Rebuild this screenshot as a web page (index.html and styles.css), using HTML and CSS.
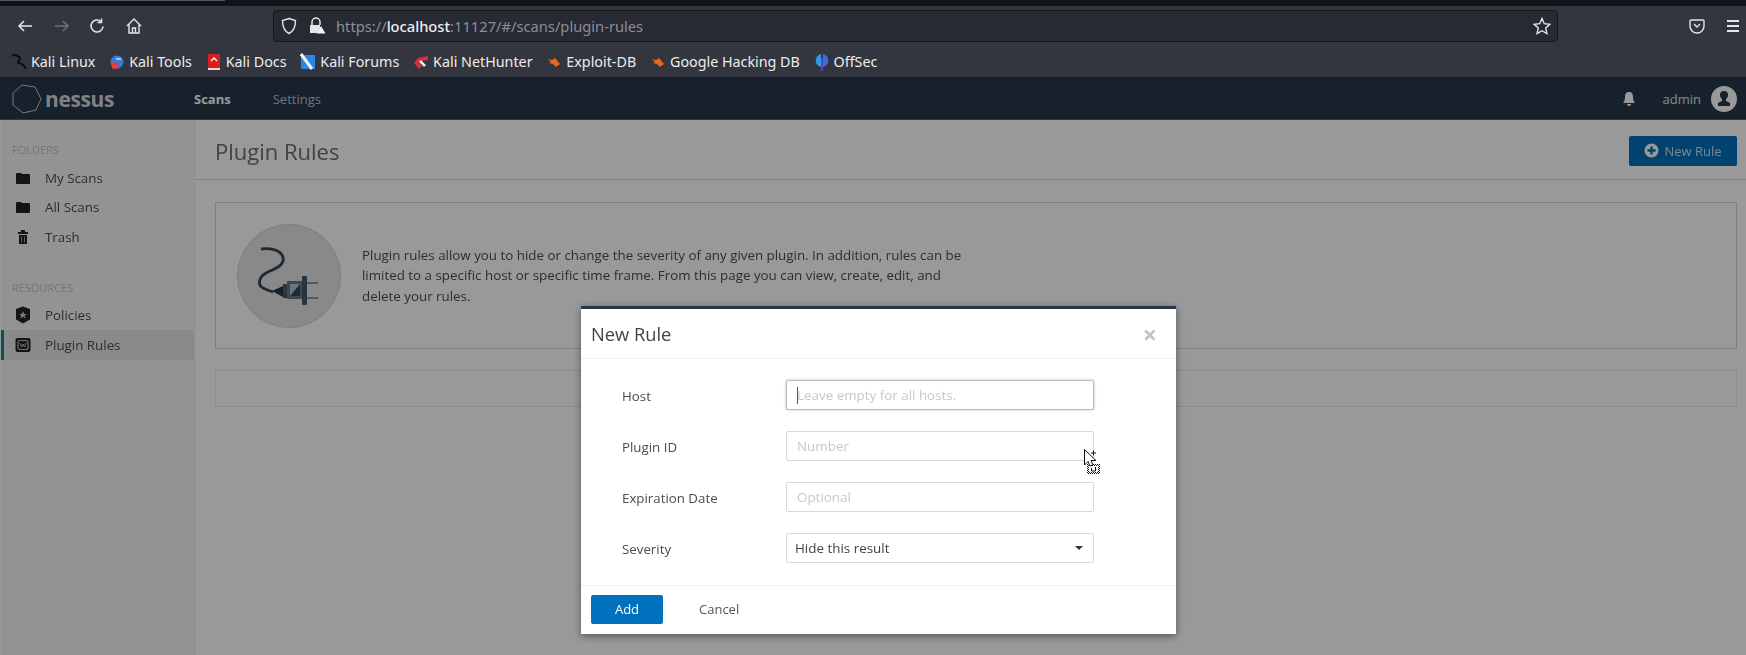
FILE: index.html
```html
<!DOCTYPE html>
<html lang="en">
<head>
    <meta charset="UTF-8">
    <title>Nessus - Plugin Rules</title>
    <link rel="stylesheet" href="styles.css">
</head>
<body>

<div class="screen">
    <div class="tabstrip"><div class="tabline"></div></div>

    <div class="toolbar">
        <svg class="tool tool-back" width="18" height="18" viewBox="0 0 18 18"><path d="M16 9H3M8 4 3 9l5 5" fill="none" stroke="#e6e6e8" stroke-width="1.5"/></svg>
        <svg class="tool tool-forward" width="18" height="18" viewBox="0 0 18 18"><path d="M2 9h13M10 4l5 5-5 5" fill="none" stroke="#6f717a" stroke-width="1.5"/></svg>
        <svg class="tool tool-reload" width="18" height="18" viewBox="0 0 18 18"><path d="M15 9.500A6 6 0 1 1 12.800 4.300M13.500 1.500v4h-4" fill="none" stroke="#e6e6e8" stroke-width="1.6"/></svg>
        <svg class="tool tool-home" width="18" height="18" viewBox="0 0 18 18"><path d="M2 9 9 2l7 7M4 7.500V16h10V7.500M7.500 16v-5h3v5" fill="none" stroke="#e6e6e8" stroke-width="1.4"/></svg>
        <div class="urlbar">
            <svg class="url-shield" width="16" height="18" viewBox="0 0 16 18"><path d="M8 1.500 14.500 3.500C14.500 10 13 14 8 16.500 3 14 1.500 10 1.500 3.500Z" fill="none" stroke="#e6e6e8" stroke-width="1.4"/></svg>
            <svg class="url-lock" width="18" height="18" viewBox="0 0 18 18"><path d="M4 8V5a4 4 0 0 1 8 0v3" fill="none" stroke="#e6e6e8" stroke-width="1.5"/><path d="M2 8h10v3l-3 5H2Z" fill="#e6e6e8"/><path d="M13 9l4.500 7.500h-9Z" fill="#f2f2f2"/></svg>
            <span class="url-text">https://<b>localhost</b>:11127/#/scans/plugin-rules</span>
            <svg class="url-star" width="18" height="18" viewBox="0 0 18 18"><path d="M9 1.500 11.300 6.700 16.800 7.300 12.700 11 13.900 16.500 9 13.700 4.100 16.500 5.300 11 1.200 7.300 6.700 6.700Z" fill="none" stroke="#e6e6e8" stroke-width="1.4"/></svg>
        </div>
        <svg class="tool tool-pocket" width="16" height="18" viewBox="0 0 16 18"><path d="M2 3h12a1 1 0 0 1 1 1v5a7 7 0 0 1-14 0V4a1 1 0 0 1 1-1Z" fill="none" stroke="#e6e6e8" stroke-width="1.4"/><path d="M5 7l3 3 3-3" fill="none" stroke="#e6e6e8" stroke-width="1.4"/></svg>
        <div class="tool-menu"><i></i><i></i><i></i></div>
    </div>

    <div class="bookmarks">
        <a class="bookmark">
            <svg width="16" height="18" viewBox="0 0 16 18"><path d="M1 3c3-2 5-1 7 1 2 2 0 4-1 5s3 1 5 3l3 4" fill="none" stroke="#0b0b0d" stroke-width="2"/></svg>
            Kali Linux</a>
        <a class="bookmark">
            <svg width="16" height="16" viewBox="0 0 14 16"><circle cx="7" cy="8" r="6.500" fill="#2f7fe0"/><circle cx="5" cy="11.500" r="3.500" fill="#e2403f"/><path d="M6 5h5" stroke="#cfe3fa" stroke-width="1.500"/></svg>
            Kali Tools</a>
        <a class="bookmark">
            <svg width="16" height="18" viewBox="0 0 14 18"><rect x="1" y="1" width="12" height="14" fill="#d81e1e"/><rect x="1" y="15" width="12" height="2" fill="#f0d8d8"/><path d="M4 8l3-3 3 3" fill="none" stroke="#fff" stroke-width="1.300"/></svg>
            Kali Docs</a>
        <a class="bookmark">
            <svg width="16" height="18" viewBox="0 0 16 18"><rect x="1" y="2" width="14" height="14" fill="#2a86e8"/><path d="M1 1l11 15" stroke="#f2f2f2" stroke-width="3"/></svg>
            Kali Forums</a>
        <a class="bookmark">
            <svg width="16" height="18" viewBox="0 0 16 18"><path d="M15 3 5 5 1 10l5 6 3-3-3-3 3-2 6-1Z" fill="#d62d3a"/><path d="M7 8l5 5" stroke="#eee" stroke-width="2.500"/></svg>
            Kali NetHunter</a>
        <a class="bookmark">
            <svg width="16" height="16" viewBox="0 0 14 16"><path d="M1 5l4 1 3-2 5 6-4 3-3-3-4-1 2-1Z" fill="#e8691e"/></svg>
            Exploit-DB</a>
        <a class="bookmark">
            <svg width="16" height="16" viewBox="0 0 14 16"><path d="M1 5l4 1 3-2 5 6-4 3-3-3-4-1 2-1Z" fill="#e8691e"/></svg>
            Google Hacking DB</a>
        <a class="bookmark">
            <svg width="16" height="20" viewBox="0 0 14 20"><path d="M6 2C2 3 0 7 1 11c1 2 3 3 5 4Z" fill="#2f9be8"/><path d="M8 2c4 1 6 5 5 9-1 2-3 3-5 4Z" fill="#3a6fe0"/><path d="M7 6v13" stroke="#7a3fd8" stroke-width="1.500"/></svg>
            OffSec</a>
    </div>

    <div class="app">
        <header class="topbar">
            <div class="logo">
                <svg width="32" height="30" viewBox="0 0 32 30"><path d="M11 1 24 3 30 15 25 26 12 29 2 21 2 9Z" fill="none" stroke="#fff" stroke-opacity=".75" stroke-width="1"/></svg>
                <span class="logo-text">nessus</span>
            </div>
            <nav class="topnav">
                <a class="topnav-item is-active">Scans</a>
                <a class="topnav-item">Settings</a>
            </nav>
            <div class="userbox">
                <svg width="14" height="16" viewBox="0 0 14 16"><path d="M7 1c-3 0-4 2-4 5 0 3-1 5-2 6h12c-1-1-2-3-2-6 0-3-1-5-4-5ZM5 13a2 2 0 0 0 4 0Z" fill="#fff"/></svg>
                <span class="username">admin</span>
                <div class="avatar">
                    <svg width="26" height="26" viewBox="0 0 26 26"><circle cx="13" cy="13" r="13" fill="#fff"/><path d="M13 5a4 4 0 0 1 4 4c0 2-1 3-2 4v2l4 2v3H7v-3l4-2v-2c-1-1-2-2-2-4a4 4 0 0 1 4-4Z" fill="#263748"/></svg>
                </div>
            </div>
        </header>

        <div class="layout">
            <aside class="sidebar">
                <h4 class="side-title">FOLDERS</h4>
                <a class="side-item">
                    <svg class="side-icon" width="16" height="14" viewBox="0 0 16 14"><path d="M1 3a1 1 0 0 1 1-1h4l1 1h7a1 1 0 0 1 1 1v8a1 1 0 0 1-1 1H2a1 1 0 0 1-1-1Z" fill="#222"/></svg>
                    My Scans</a>
                <a class="side-item">
                    <svg class="side-icon" width="16" height="14" viewBox="0 0 16 14"><path d="M1 3a1 1 0 0 1 1-1h4l1 1h7a1 1 0 0 1 1 1v8a1 1 0 0 1-1 1H2a1 1 0 0 1-1-1Z" fill="#222"/></svg>
                    All Scans</a>
                <a class="side-item">
                    <svg class="side-icon" width="16" height="16" viewBox="0 0 16 16"><path d="M6 1h4v2h3v2H3V3h3ZM4 6h8v9H4Z" fill="#222"/><path d="M6.500 7.500v6M9.500 7.500v6" stroke="#999" stroke-width="1"/></svg>
                    Trash</a>

                <h4 class="side-title side-title-second">RESOURCES</h4>
                <a class="side-item">
                    <svg class="side-icon" width="16" height="18" viewBox="0 0 16 18"><path d="M8 .500 15 3V13.500L8 17.500 1 13.500V3Z" fill="#222"/><path d="M8 5 9.200 8h2.800l-2.200 1.700.9 2.800L8 10.800 5.300 12.500l.9-2.800L4 8h2.800Z" fill="#ccc"/></svg>
                    Policies</a>
                <a class="side-item is-active">
                    <svg class="side-icon" width="16" height="16" viewBox="0 0 16 16"><rect x="0.500" y="1" width="15" height="14" rx="2" fill="#222"/><rect x="3" y="3.500" width="10" height="9" rx="2" fill="none" stroke="#bbb" stroke-width="1.200"/><path d="M5 6l1.500 4L8 7l1.500 3L11 6" fill="none" stroke="#bbb" stroke-width="1"/></svg>
                    Plugin Rules</a>
            </aside>

            <main class="content">
                <div class="titlebar">
                    <h1>Plugin Rules</h1>
                    <button class="btn-new" type="button">
                        <svg width="15" height="15" viewBox="0 0 15 15"><circle cx="7.500" cy="7.500" r="7" fill="#fff"/><path d="M7.500 3.500v8M3.500 7.500h8" stroke="#0071bc" stroke-width="2.400"/></svg>
                        New Rule</button>
                </div>
                <div class="panel">
                    <section class="intro">
                        <div class="intro-art">
                            <svg width="104" height="104" viewBox="0 0 104 104">
                                <circle cx="52" cy="52" r="51.500" fill="#e4e4e4" stroke="#d0d0d0"/>
                                <path d="M24 25c8-1 19 0 22 8 2 9-9 12-17 16-7 4-9 12-3 15 4 2 7 3 10 4" fill="none" stroke="#33465a" stroke-width="2.800"/>
                                <path d="M35 67l11-5v11Z" fill="#263748"/>
                                <rect x="46" y="60" width="4" height="14" fill="#4a5a6a"/>
                                <rect x="50" y="57" width="15" height="18" fill="#66788a"/>
                                <path d="M53 60h10v12H53Z" fill="#bcc5cd"/>
                                <path d="M63 60v12H53Z" fill="#33465a"/>
                                <rect x="65" y="52" width="5" height="29" rx="1" fill="#445669"/>
                                <path d="M70 59h11M70 74h11" stroke="#66788a" stroke-width="1.600"/>
                            </svg>
                        </div>
                        <p>Plugin rules allow you to hide or change the severity of any given plugin. In addition, rules can be limited to a specific host or specific time frame. From this page you can view, create, edit, and delete your rules.</p>
                    </section>
                    <div class="empty-row"></div>
                </div>
            </main>
        </div>

        <div class="overlay"></div>

        <form class="modal">
            <div class="modal-head">
                <h2>New Rule</h2>
                <span class="modal-close">&times;</span>
            </div>
            <div class="modal-body">
                <label class="field-label" for="host">Host</label>
                <div class="field">
                    <input class="field-input is-focused" id="host" type="text" placeholder="Leave empty for all hosts.">
                    <span class="caret"></span>
                </div>
                <label class="field-label" for="pluginId">Plugin ID</label>
                <div class="field"><input class="field-input" id="pluginId" type="text" placeholder="Number"></div>
                <label class="field-label" for="expires">Expiration Date</label>
                <div class="field"><input class="field-input" id="expires" type="text" placeholder="Optional"></div>
                <label class="field-label" for="severity">Severity</label>
                <div class="field">
                    <select class="field-input field-select" id="severity">
                        <option>Hide this result</option>
                    </select>
                    <span class="select-arrow"></span>
                </div>
            </div>
            <div class="modal-foot">
                <button class="btn-add" type="button">Add</button>
                <button class="btn-cancel" type="button">Cancel</button>
            </div>
        </form>
    </div>
</div>

<svg class="cursor" width="20" height="28" viewBox="0 0 20 28">
    <defs>
        <pattern id="checker" width="2" height="2" patternUnits="userSpaceOnUse">
            <rect width="1" height="1" fill="#111"/>
            <rect x="1" y="1" width="1" height="1" fill="#111"/>
        </pattern>
    </defs>
    <rect x="3" y="15" width="13" height="10" fill="#fff"/>
    <rect x="3" y="15" width="13" height="10" fill="url(#checker)"/>
    <rect x="5" y="17" width="9" height="6" fill="#fff"/>
    <path d="M.5.500V16L4 12.500 6 17l3-1-2-4.500h5Z" fill="#fff" stroke="#111"/>
    <path d="M9.500 1.500v5M7 4h5" stroke="#111"/>
    <path d="M7.500 19v3h4v-4" fill="none" stroke="#111"/>
</svg>

</body>
</html>
```

FILE: styles.css
```css
html, body {
    margin: 0;
    padding: 0;
    height: 655px;
    overflow: hidden;
}
body {
    font-family: "Open Sans", Arial, sans-serif;
    font-size: 13px;
    background-color: #fff;
    position: relative;
}
.screen {
    display: flex;
    flex-direction: column;
    height: 655px;
    filter: blur(0.5px);
}

/* browser chrome */
.tabstrip {
    height: 6px;
    background-color: #121317;
    flex-shrink: 0;
}
.tabline {
    width: 225px;
    height: 1px;
    background-color: #55565c;
}
.toolbar {
    height: 40px;
    background-color: #33363f;
    display: flex;
    align-items: center;
    flex-shrink: 0;
    position: relative;
}
.tool {
    flex-shrink: 0;
}
.tool-back { margin-left: 16px; }
.tool-forward { margin-left: 19px; }
.tool-reload { margin-left: 17px; }
.tool-home { margin-left: 19px; }
.urlbar {
    width: 1285px;
    height: 32px;
    margin-left: 130px;
    box-sizing: border-box;
    background-color: #272933;
    border: 1px solid #16171c;
    border-radius: 4px;
    display: flex;
    align-items: center;
    padding-left: 7px;
}
.url-lock { margin-left: 11px; }
.url-text {
    margin-left: 10px;
    font-family: "Noto Sans", sans-serif;
    font-size: 14.7px;
    color: #8d8f97;
    flex: 1;
}
.url-text b {
    color: #eeeef0;
    font-weight: 500;
}
.url-star { margin-right: 6px; }
.tool-pocket { margin-left: 131px; }
.tool-menu {
    margin-left: 22px;
    width: 12px;
    display: flex;
    flex-direction: column;
    gap: 3px;
}
.tool-menu i {
    height: 2px;
    background-color: #e6e6e8;
}
.bookmarks {
    height: 31px;
    background-color: #33363f;
    display: flex;
    align-items: center;
    padding-left: 11px;
    gap: 13.8px;
    flex-shrink: 0;
}
.bookmark {
    display: flex;
    align-items: center;
    gap: 4px;
    color: #eceded;
    font-family: "Noto Sans", sans-serif;
    font-size: 14.3px;
    white-space: nowrap;
}

/* nessus app */
.app {
    position: relative;
    flex: 1;
    display: flex;
    flex-direction: column;
    min-height: 0;
}
.topbar {
    height: 41px;
    padding-top: 1px;
    background-color: #263748;
    border-bottom: 1px solid #4a5a68;
    display: flex;
    align-items: center;
    flex-shrink: 0;
}
.logo {
    display: flex;
    align-items: center;
    width: 194px;
    padding-left: 11px;
    box-sizing: border-box;
    gap: 2px;
}
.logo-text {
    font-size: 21px;
    font-weight: 700;
    color: #d4d8dc;
    letter-spacing: -0.4px;
}
.topnav {
    display: flex;
    gap: 42px;
}
.topnav-item {
    color: #b9c3cc;
    font-size: 13px;
}
.topnav-item.is-active {
    color: #fff;
    font-weight: 700;
}
.userbox {
    margin-left: auto;
    display: flex;
    align-items: center;
    padding-right: 9px;
}
.username {
    color: #e0e4e8;
    font-size: 13px;
    margin-left: 27px;
    margin-right: 10px;
}
.avatar {
    height: 26px;
}
.layout {
    flex: 1;
    display: flex;
    min-height: 0;
}
.sidebar {
    width: 195px;
    background-color: #f6f6f6;
    border-right: 1px solid #ededed;
    border-left: 1px solid #fff;
    box-sizing: border-box;
    padding-top: 22px;
    flex-shrink: 0;
}
.side-title {
    margin: 0 0 5px 11px;
    font-size: 11px;
    line-height: 16px;
    font-weight: 400;
    color: #c4c4c4;
}
.side-title-second {
    margin-top: 28px;
    margin-bottom: 5px;
}
.side-item {
    height: 29.5px;
    display: flex;
    align-items: center;
    padding-left: 14px;
    color: #4c4c4c;
    font-size: 13.35px;
    position: relative;
}
.side-icon {
    width: 16px;
    margin-right: 14px;
    flex-shrink: 0;
}
.side-item.is-active {
    background-color: #e6e6e6;
    box-shadow: inset 3px 0 0 #0a8a94;
}
.content {
    flex: 1;
    min-width: 0;
}
.titlebar {
    height: 60px;
    box-sizing: border-box;
    border-bottom: 1px solid #dcdcdc;
    padding: 2px 9px 0 20px;
    display: flex;
    align-items: center;
    justify-content: space-between;
}
.titlebar h1 {
    margin: 0;
    font-size: 22px;
    font-weight: 400;
    color: #6e6e6e;
}
.btn-new {
    width: 108px;
    height: 30px;
    background-color: #0071bc;
    color: #cfe0ec;
    border: none;
    border-radius: 2px;
    font-family: inherit;
    font-size: 13px;
    display: flex;
    align-items: center;
    justify-content: center;
    gap: 5px;
}
.panel {
    padding: 22px 9px 0 20px;
}
.intro {
    height: 147px;
    box-sizing: border-box;
    border: 1px solid #d6d6d6;
    display: flex;
    align-items: center;
    padding-left: 21px;
}
.intro-art {
    height: 104px;
    margin-right: 21px;
}
.intro p {
    width: 610px;
    margin: 0;
    font-size: 13.35px;
    line-height: 20.5px;
    color: #4c4c4c;
}
.empty-row {
    height: 37px;
    margin-top: 21px;
    box-sizing: border-box;
    border: 1px dotted #d8d8d8;
}
.overlay {
    position: absolute;
    inset: 0;
    background-color: rgba(0, 0, 0, 0.4);
}

/* dialog */
.modal {
    position: absolute;
    left: 581px;
    top: 229px;
    width: 595px;
    height: 328px;
    box-sizing: border-box;
    background-color: #fff;
    border-top: 3px solid #263748;
    box-shadow: 0 2px 8px rgba(0, 0, 0, 0.45);
    display: flex;
    flex-direction: column;
}
.modal-head {
    height: 49px;
    border-bottom: 1px dotted #e4e4e4;
    display: flex;
    align-items: center;
    justify-content: space-between;
    padding: 0 19px 0 10px;
}
.modal-head h2 {
    margin: 0;
    font-size: 18.3px;
    font-weight: 400;
    color: #444;
}
.modal-close {
    font-size: 25px;
    font-weight: 700;
    color: #c4c4c4;
}
.modal-body {
    height: 227px;
    box-sizing: border-box;
    border-bottom: 1px dotted #e4e4e4;
    padding-top: 21px;
    padding-left: 41px;
    display: grid;
    grid-template-columns: 164px 308px;
    grid-auto-rows: 30px;
    row-gap: 21px;
    align-items: center;
}
.field-label {
    color: #4c4c4c;
    font-size: 13.3px;
    padding-top: 2px;
}
.field {
    position: relative;
    height: 30px;
}
.field-input {
    width: 100%;
    height: 30px;
    box-sizing: border-box;
    border: 1px solid #d8d8d8;
    border-radius: 2px;
    padding: 0 10px;
    font-family: inherit;
    font-size: 13.4px;
    color: #444;
    background-color: #fff;
    outline: none;
}
.field-input::placeholder {
    color: #c8c8c8;
    opacity: 1;
}
.field-input.is-focused {
    border-color: #bdbdbd;
    box-shadow: 0 0 3px rgba(0, 0, 0, 0.25);
}
.field-select {
    appearance: none;
    padding-left: 8px;
}
.caret {
    position: absolute;
    left: 11px;
    top: 7px;
    width: 1px;
    height: 17px;
    background-color: #555;
}
.select-arrow {
    position: absolute;
    right: 11px;
    top: 13px;
    border-left: 4px solid transparent;
    border-right: 4px solid transparent;
    border-top: 4px solid #333;
}
.modal-foot {
    flex: 1;
    display: flex;
    align-items: center;
    padding: 0 0 2px 10px;
}
.btn-add {
    width: 72px;
    height: 29px;
    background-color: #0071bc;
    color: #fff;
    border: none;
    border-radius: 2px;
    font-family: inherit;
    font-size: 13px;
}
.btn-cancel {
    margin-left: 36px;
    padding: 0;
    background: none;
    border: none;
    color: #555;
    font-family: inherit;
    font-size: 13px;
}
.cursor {
    position: absolute;
    left: 1084px;
    top: 449px;
}
```
